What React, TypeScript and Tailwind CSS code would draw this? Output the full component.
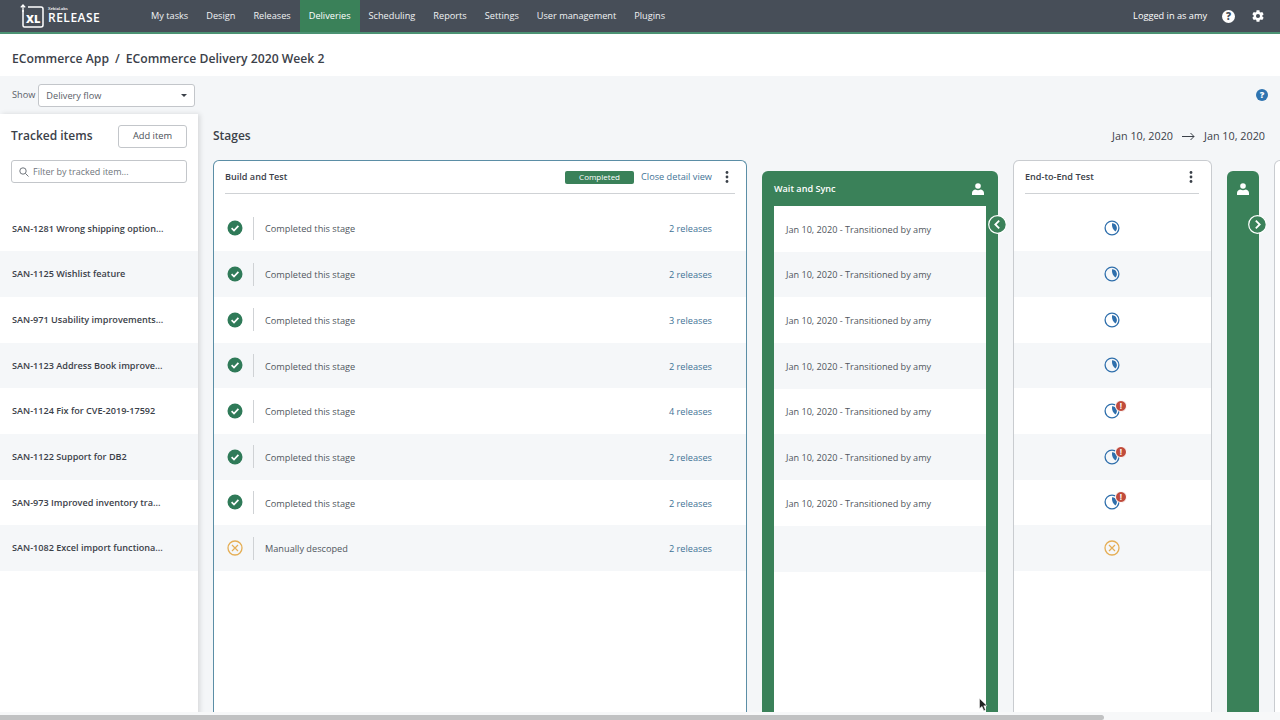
import React from "react";

const font = { fontFamily: '"Open Sans", sans-serif' };

const nav = ["My tasks", "Design", "Releases", "Deliveries", "Scheduling", "Reports", "Settings", "User management", "Plugins"];

type Row = { name: string; status: string; rel: string; wait: boolean; e2e: "clock" | "warn" | "x" };
const rows: Row[] = [
  { name: "SAN-1281 Wrong shipping option...", status: "Completed this stage", rel: "2 releases", wait: true, e2e: "clock" },
  { name: "SAN-1125 Wishlist feature", status: "Completed this stage", rel: "2 releases", wait: true, e2e: "clock" },
  { name: "SAN-971 Usability improvements...", status: "Completed this stage", rel: "3 releases", wait: true, e2e: "clock" },
  { name: "SAN-1123 Address Book improve...", status: "Completed this stage", rel: "2 releases", wait: true, e2e: "clock" },
  { name: "SAN-1124 Fix for CVE-2019-17592", status: "Completed this stage", rel: "4 releases", wait: true, e2e: "warn" },
  { name: "SAN-1122 Support for DB2", status: "Completed this stage", rel: "2 releases", wait: true, e2e: "warn" },
  { name: "SAN-973 Improved inventory tra...", status: "Completed this stage", rel: "2 releases", wait: true, e2e: "warn" },
  { name: "SAN-1082 Excel import functiona...", status: "Manually descoped", rel: "2 releases", wait: false, e2e: "x" },
];

const shade = (i: number) => (i % 2 === 1 ? "bg-[#f5f7f9]" : "bg-white");

const Check = () => (
  <svg width="16" height="16" viewBox="0 0 16 16">
    <circle cx="8" cy="8" r="7.5" fill="#2f7a58" />
    <path d="M4.6 8.2 7 10.5 11.4 5.9" fill="none" stroke="#fff" strokeWidth="1.7" />
  </svg>
);
const XIcon = ({ s = 16 }: { s?: number }) => (
  <svg width={s} height={s} viewBox="0 0 16 16">
    <circle cx="8" cy="8" r="7" fill="none" stroke="#e5ae55" strokeWidth="1.3" />
    <path d="M5 5 11 11M11 5 5 11" stroke="#e5ae55" strokeWidth="1.2" />
  </svg>
);
const Clock = () => (
  <svg width="16" height="16" viewBox="0 0 16 16">
    <circle cx="8" cy="8" r="6.9" fill="none" stroke="#2f6fac" strokeWidth="1.3" />
    <path d="M8 3.3A4.7 4.7 0 0 1 11.4 11.4C9.2 10 7.6 7 8 3.3Z" fill="#2f6fac" />
  </svg>
);
const Warn = () => (
  <div className="relative w-[16px] h-[16px]">
    <Clock />
    <div className="absolute left-[11px] top-[-3px] w-[10px] h-[10px] box-content rounded-full bg-[#c04b3c] border border-white flex items-center justify-center text-white text-[8px] font-bold leading-none">
      !
    </div>
  </div>
);
const Dots = () => (
  <svg width="4" height="12" viewBox="0 0 4 12" className="shrink-0">
    <circle cx="2" cy="1.5" r="1.4" fill="#3b4149" />
    <circle cx="2" cy="6" r="1.4" fill="#3b4149" />
    <circle cx="2" cy="10.5" r="1.4" fill="#3b4149" />
  </svg>
);
const Person = () => (
  <svg width="12" height="12" viewBox="0 0 12 12">
    <circle cx="6" cy="3" r="2.8" fill="#fff" />
    <path d="M0 12V10C0 8 2 6.8 3.5 6.6 4.5 7.3 7.5 7.3 8.5 6.6 10 6.8 12 8 12 10V12Z" fill="#fff" />
  </svg>
);
const Chev = ({ left }: { left?: boolean }) => (
  <svg width="19" height="19" viewBox="0 0 19 19">
    <circle cx="9.5" cy="9.5" r="8.8" fill="#3a8159" stroke="#fff" strokeWidth="1.2" />
    <path d={left ? "M11.2 5.6 7.3 9.5 11.2 13.4" : "M7.8 5.6 11.7 9.5 7.8 13.4"} fill="none" stroke="#fff" strokeWidth="1.8" />
  </svg>
);

export default function App() {
  return (
    <div className="w-[1280px] h-[720px] overflow-hidden flex flex-col bg-[#f4f6f8] text-[#3b4149] relative" style={font}>
      {/* Top nav */}
      <header className="h-[34px] shrink-0 bg-[#474e58] border-b-2 border-[#4b9273] flex items-stretch">
        <div className="w-[142px] pl-[20px] flex items-center gap-[4px] shrink-0">
          <svg width="24" height="24" viewBox="0 0 24 24">
            <path d="M3 6V21.5Q3 23 4.5 23H21Q23 23 23 21V5Q23 3 21 3H8" fill="none" stroke="#fff" strokeWidth="1.5" />
            <path d="M3 8V1M0.8 3.4 3 1 5.2 3.4" fill="none" stroke="#fff" strokeWidth="1.3" />
            <text x="6" y="18.5" fill="#fff" fontSize="11" fontWeight="800" fontFamily="Open Sans, sans-serif">XL</text>
          </svg>
          <div className="flex flex-col text-white pb-[3px]">
            <span className="text-[4px] font-semibold leading-[6px]">XebiaLabs</span>
            <span className="text-[12px] font-semibold tracking-[0.5px] leading-[12px]">RELEASE</span>
          </div>
        </div>
        <nav className="flex items-stretch text-[9.2px] text-[#f0f2f4]">
          {nav.map((n) => (
            <div
              key={n}
              className={n === "Deliveries" ? "bg-[#3a8159] px-[9px] flex items-center text-white" : "px-[9px] flex items-center"}
            >
              {n}
            </div>
          ))}
        </nav>
        <div className="ml-auto flex items-center pr-[15px] text-white">
          <span className="text-[9.2px] mr-[15px]">Logged in as amy</span>
          <svg width="13" height="13" viewBox="0 0 13 13" className="mr-[16px]">
            <circle cx="6.5" cy="6.5" r="6.5" fill="#fff" />
            <text x="6.5" y="10.2" textAnchor="middle" fontSize="10" fontWeight="800" fill="#474e58" fontFamily="Open Sans, sans-serif">?</text>
          </svg>
          <svg width="14" height="14" viewBox="0 0 24 24" fill="#fff">
            <path d="M19.4 13a7.6 7.6 0 0 0 0-2l2.3-1.8-2.4-4.2-2.7 1.1a7.7 7.7 0 0 0-1.7-1L14.5 2h-5l-.4 3.1a7.7 7.7 0 0 0-1.7 1L4.7 5 2.3 9.2 4.6 11a7.6 7.6 0 0 0 0 2l-2.3 1.8 2.4 4.2 2.7-1.1a7.7 7.7 0 0 0 1.7 1l.4 3.1h5l.4-3.1a7.7 7.7 0 0 0 1.7-1l2.7 1.1 2.4-4.2ZM12 15.5a3.5 3.5 0 1 1 0-7 3.5 3.5 0 0 1 0 7Z" />
          </svg>
        </div>
      </header>

      {/* Breadcrumb */}
      <div className="h-[42px] shrink-0 bg-white flex items-center pl-[12px] pt-[8px] text-[12.2px] font-semibold text-[#3b4149]">
        ECommerce App<span className="mx-[6px]">/</span>ECommerce Delivery 2020 Week 2
      </div>

      {/* Show bar */}
      <div className="h-[38px] shrink-0 flex items-center pl-[12px] pr-[12px] text-[9.2px] text-[#5a6068]">
        <span className="mr-[3px]">Show</span>
        <div className="w-[157px] h-[23px] bg-white border border-[#c3c6ca] rounded-[3px] flex items-center justify-between pl-[7px] pr-[7px]">
          <span className="pt-[1px]">Delivery flow</span>
          <span className="w-0 h-0 border-x-[3px] border-x-transparent border-t-[3px] border-t-[#3b4149]" />
        </div>
        <svg width="12" height="12" viewBox="0 0 12 12" className="ml-auto">
          <circle cx="6" cy="6" r="6" fill="#2f74b0" />
          <text x="6" y="9.3" textAnchor="middle" fontSize="9" fontWeight="800" fill="#fff" fontFamily="Open Sans, sans-serif">?</text>
        </svg>
      </div>

      {/* Main */}
      <div className="flex-1 min-h-0 flex">
        {/* Left panel */}
        <aside className="w-[198px] shrink-0 bg-white shadow-[2px_0_5px_rgba(0,0,0,0.12)] flex flex-col z-10">
          <div className="h-[34px] mt-[5px] flex items-center justify-between pl-[11px] pr-[11px]">
            <span className="text-[12px] font-semibold text-[#3b4149]">Tracked items</span>
            <div className="w-[69px] h-[23px] border border-[#c3c6ca] rounded-[3px] flex items-center justify-center text-[9.3px] text-[#4a5058]">
              Add item
            </div>
          </div>
          <div className="mx-[11px] mt-[7px] h-[23px] border border-[#c3c6ca] rounded-[3px] flex items-center pl-[7px] gap-[4px] text-[9px] text-[#70767d]">
            <svg width="10" height="10" viewBox="0 0 10 10" fill="none" stroke="#70767d" strokeWidth="1">
              <circle cx="4" cy="4" r="3.2" />
              <path d="M6.4 6.4 9.5 9.5" />
            </svg>
            Filter by tracked item...
          </div>
          <div className="mt-[22.5px]">
            {rows.map((r, i) => (
              <div key={r.name} className={`h-[45.7px] flex items-center pl-[12px] text-[9.1px] font-semibold text-[#3b4149] ${shade(i)}`}>
                {r.name}
              </div>
            ))}
          </div>
        </aside>

        {/* Stages */}
        <section className="flex-1 min-w-0 flex flex-col pl-[15px]">
          <div className="h-[46px] shrink-0 flex items-center justify-between pr-[15px] pb-[2px]">
            <span className="text-[12px] font-semibold text-[#3b4149]">Stages</span>
            <div className="flex items-center text-[10.8px] text-[#3b4149]">
              <span>Jan 10, 2020</span>
              <svg width="13" height="9" viewBox="0 0 13 9" className="mx-[9px]" fill="none" stroke="#3b4149" strokeWidth="1">
                <path d="M0 4.5H12M8.5 1 12 4.5 8.5 8" />
              </svg>
              <span>Jan 10, 2020</span>
            </div>
          </div>
          <div className="flex-1 min-h-0 flex items-stretch gap-[15px] mr-[-20px] pb-[8px]">
            {/* Build and Test */}
            <div className="w-[534px] shrink-0 bg-white border border-[#5b8ea6] rounded-t-[6px] border-b-0 flex flex-col">
              <div className="h-[33px] mx-[11px] flex items-center border-b border-[#cfd2d5] text-[9.1px] font-semibold text-[#3b4149]">
                <span>Build and Test</span>
                <span className="ml-auto w-[69px] h-[13px] bg-[#3a8159] rounded-[2px] text-white text-[8px] font-normal flex items-center justify-center">
                  Completed
                </span>
                <span className="ml-[7px] text-[9.2px] font-normal text-[#3f7396]">Close detail view</span>
                <span className="ml-[13px] mr-[6px]"><Dots /></span>
              </div>
              <div className="mt-[11.5px]">
                {rows.map((r, i) => (
                  <div key={r.name} className={`h-[45.7px] flex items-center pl-[13px] pr-[34px] text-[9.2px] ${shade(i)}`}>
                    {r.wait ? <Check /> : <XIcon />}
                    <span className="w-px h-[23px] bg-[#cfd2d5] ml-[10px] mr-[11px]" />
                    <span className="text-[#50565d] pt-[2px]">{r.status}</span>
                    <span className="ml-auto text-[#3f7396] pt-[2px]">{r.rel}</span>
                  </div>
                ))}
              </div>
            </div>

            {/* Wait and Sync */}
            <div className="w-[236px] shrink-0 mt-[11px] bg-[#3a8159] rounded-t-[6px] flex flex-col relative">
              <div className="h-[35px] shrink-0 flex items-center justify-between pl-[12px] pr-[14px] pt-[1px] text-white text-[9.1px] font-semibold">
                <span>Wait and Sync</span>
                <Person />
              </div>
              <div className="flex-1 ml-[12px] mr-[12px] bg-white rounded-t-[4px]">
                {rows.map((r, i) => (
                  <div key={r.name} className={`h-[45.7px] flex items-center pl-[12px] pt-[1px] text-[9.1px] text-[#50565d] ${shade(i)}`}>
                    {r.wait ? "Jan 10, 2020 - Transitioned by amy" : ""}
                  </div>
                ))}
              </div>
              <div className="absolute right-[-9px] top-[44px]"><Chev left /></div>
            </div>

            {/* End-to-End Test */}
            <div className="w-[199px] shrink-0 bg-white border border-[#c9ccd0] border-b-0 rounded-t-[6px] flex flex-col">
              <div className="h-[33px] ml-[11px] mr-[12px] flex items-center justify-between border-b border-[#cfd2d5] text-[9.1px] font-semibold text-[#3b4149]">
                <span>End-to-End Test</span>
                <span className="mr-[6px]"><Dots /></span>
              </div>
              <div className="mt-[11.5px]">
                {rows.map((r, i) => (
                  <div key={r.name} className={`h-[45.7px] flex items-center justify-center pr-[1px] ${shade(i)}`}>
                    {r.e2e === "clock" ? <Clock /> : r.e2e === "warn" ? <Warn /> : <XIcon />}
                  </div>
                ))}
              </div>
            </div>

            {/* Collapsed stage */}
            <div className="w-[32px] shrink-0 mt-[11px] bg-[#3a8159] rounded-t-[6px] flex flex-col items-center pt-[12px] relative">
              <Person />
              <div className="absolute right-[-8px] top-[44px]"><Chev /></div>
            </div>

            {/* Next stage */}
            <div className="w-[60px] shrink-0 bg-white border border-[#c9ccd0] border-b-0 rounded-t-[6px]" />
          </div>
        </section>
      </div>

      {/* Horizontal scrollbar */}
      <div className="absolute left-0 right-0 bottom-0 h-[8px] bg-[#f7f8f9] z-20 flex items-end">
        <div className="w-[1104px] h-[5px] bg-[#c1c2c3] rounded-r-[3px]" />
      </div>

      {/* Mouse cursor */}
      <svg width="9" height="14" viewBox="0 0 9 14" className="absolute left-[979px] top-[698px] z-30">
        <path d="M0.5 0.5V10.5L3 8.4 4.8 12.8 6.5 12 4.7 7.8H8Z" fill="#222" stroke="#fff" strokeWidth="0.5" />
      </svg>
    </div>
  );
}
